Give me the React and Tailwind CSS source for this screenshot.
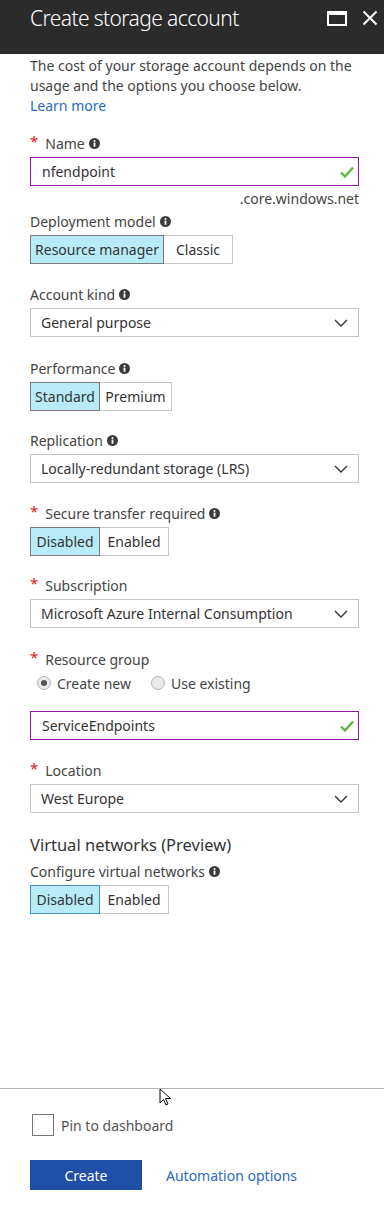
import { useState } from "react";

const font = { fontFamily: '"Noto Sans", "Open Sans", sans-serif' };

function Info() {
  return (
    <svg width="11" height="11" viewBox="0 0 12 12" className="ml-1 inline-block">
      <circle cx="6" cy="6" r="6" fill="#3b3b3b" />
      <rect x="5" y="5" width="2" height="4.5" fill="#fff" />
      <circle cx="6" cy="3.2" r="1.1" fill="#fff" />
    </svg>
  );
}

function Check() {
  return (
    <svg width="16" height="14" viewBox="0 0 16 14">
      <path d="M2 7.5 L6 11.5 L14 2.5" fill="none" stroke="#5fb53f" strokeWidth="2.4" />
    </svg>
  );
}

function Chevron() {
  return (
    <svg width="14" height="8" viewBox="0 0 14 8">
      <path d="M1 1 L7 7 L13 1" fill="none" stroke="#333" strokeWidth="1.4" />
    </svg>
  );
}

function Label({ children, required, info }) {
  return (
    <div className="flex items-center h-5 text-[14px] text-[#444] mb-[4px]">
      {required && <span className="text-[#e81123] mr-[7px] text-[15px] leading-none -mt-1">*</span>}
      <span>{children}</span>
      {info && <Info />}
    </div>
  );
}

function Select({ value }) {
  return (
    <div className="flex items-center justify-between h-[29px] border border-[#c6c6c6] pl-[10px] pr-[10px] text-[14px] text-[#333]">
      <span>{value}</span>
      <Chevron />
    </div>
  );
}

function ValidInput({ value }) {
  return (
    <div className="flex items-center justify-between h-[29px] border border-[#8e1b9d] pl-[11px] pr-[3px] text-[14px] text-[#333]">
      <span>{value}</span>
      <Check />
    </div>
  );
}

function Toggle({ options, widths, focus }) {
  return (
    <div className="flex h-[29px]">
      {options.map((o, i) => (
        <div
          key={o}
          style={{ width: widths[i] }}
          className={
            i === 0
              ? "flex items-center justify-center bg-[#b8ebf8] border border-[#7a7a7a] text-[14px] text-[#333] " +
                (focus ? "outline-1 outline-dashed outline-[#22a0d8] -outline-offset-1" : "")
              : "flex items-center justify-center border border-l-0 border-[#c6c6c6] text-[14px] text-[#333]"
          }
        >
          {o}
        </div>
      ))}
    </div>
  );
}

function Radio({ checked, label }) {
  return (
    <div className="flex items-center gap-[6px] text-[14px] text-[#444]">
      <span className="w-[14px] h-[14px] rounded-full border border-[#b5b5b5] bg-[#eaeaea] flex items-center justify-center">
        {checked && <span className="w-[6px] h-[6px] rounded-full bg-[#555]" />}
      </span>
      {label}
    </div>
  );
}

export default function App() {
  const [pinned, setPinned] = useState(false);

  return (
    <div style={font} className="relative w-[384px] h-[1209px] bg-white flex flex-col overflow-hidden">
      <div className="h-[54px] bg-[#2b2b2b] flex items-start justify-between pl-[30px] pr-[6px] shrink-0">
        <h1 className="text-[21px] font-light text-white leading-[36px] tracking-[-0.6px]">Create storage account</h1>
        <div className="flex items-center gap-[15px] pt-[10px]">
          <svg width="20" height="15" viewBox="0 0 20 15">
            <rect x="1" y="1" width="18" height="13" fill="none" stroke="#fff" strokeWidth="2" />
            <rect x="1" y="1" width="18" height="3" fill="#fff" />
          </svg>
          <svg width="16" height="16" viewBox="0 0 16 16">
            <path d="M1.5 1.5 L14.5 14.5 M14.5 1.5 L1.5 14.5" stroke="#fff" strokeWidth="2" />
          </svg>
        </div>
      </div>

      <div className="px-[30px] pt-[2px] flex-1">
        <p className="text-[14px] leading-5 text-[#444] w-[332px]">
          The cost of your storage account depends on the usage and the options you choose below.
          <br />
          <a className="text-[#2a6ac2]">Learn more</a>
        </p>

        <div className="mt-[17px] w-[329px]">
          <Label required info>Name</Label>
          <ValidInput value="nfendpoint" />
          <div className="text-right text-[14px] text-[#444] h-5 mt-[2px]">.core.windows.net</div>
        </div>

        <div className="mt-[3px]">
          <Label info>Deployment model</Label>
          <div className="mt-[2px]">
            <Toggle options={["Resource manager", "Classic"]} widths={[134, 69]} />
          </div>
        </div>

        <div className="mt-[20px] w-[329px]">
          <Label info>Account kind</Label>
          <Select value="General purpose" />
        </div>

        <div className="mt-[21px]">
          <Label info>Performance</Label>
          <div className="mt-[1px]">
            <Toggle options={["Standard", "Premium"]} widths={[70, 72]} />
          </div>
        </div>

        <div className="mt-[19px] w-[329px]">
          <Label info>Replication</Label>
          <div className="mt-[1px]">
            <Select value="Locally-redundant storage (LRS)" />
          </div>
        </div>

        <div className="mt-[20px]">
          <Label required info>Secure transfer required</Label>
          <div className="mt-[2px]">
            <Toggle options={["Disabled", "Enabled"]} widths={[70, 69]} />
          </div>
        </div>

        <div className="mt-[19px] w-[329px]">
          <Label required>Subscription</Label>
          <div className="mt-[1px]">
            <Select value="Microsoft Azure Internal Consumption" />
          </div>
        </div>

        <div className="mt-[21px] w-[329px]">
          <Label required>Resource group</Label>
          <div className="flex items-center gap-[20px] h-5 pl-[7px] mt-[1px]">
            <Radio checked label="Create new" />
            <Radio label="Use existing" />
          </div>
          <div className="mt-[18px]">
            <ValidInput value="ServiceEndpoints" />
          </div>
        </div>

        <div className="mt-[20px] w-[329px]">
          <Label required>Location</Label>
          <Select value="West Europe" />
        </div>

        <div className="mt-[20px]">
          <div className="text-[16.5px] text-[#333] h-6 leading-6">Virtual networks (Preview)</div>
          <div className="mt-[4px]">
            <Label info>Configure virtual networks</Label>
          </div>
          <div className="mt-[2px]">
            <Toggle options={["Disabled", "Enabled"]} widths={[70, 69]} focus />
          </div>
        </div>
      </div>

      <div className="border-t border-[#b4b4b4] shrink-0 h-[121px] px-[30px] relative">
        <label className="flex items-center mt-[25px] ml-[2px] cursor-pointer" onClick={() => setPinned(!pinned)}>
          <span className="w-[22px] h-[22px] border border-[#777] bg-white flex items-center justify-center">
            {pinned && <Check />}
          </span>
          <span className="ml-[7px] text-[14px] text-[#555]">Pin to dashboard</span>
        </label>
        <div className="flex items-center mt-[24px]">
          <button className="w-[112px] h-[30px] bg-[#1f4fa6] text-white text-[14px]">Create</button>
          <a className="ml-[24px] text-[14px] text-[#2a6ac2]">Automation options</a>
        </div>
        <svg width="13" height="20" viewBox="0 0 13 20" className="absolute left-[159px] -top-[1px]">
          <path d="M1 1 L1 15 L4.5 11.5 L7 17 L9 16 L6.5 10.5 L11.5 10.5 Z" fill="#fff" stroke="#000" strokeWidth="1" />
        </svg>
      </div>
    </div>
  );
}
